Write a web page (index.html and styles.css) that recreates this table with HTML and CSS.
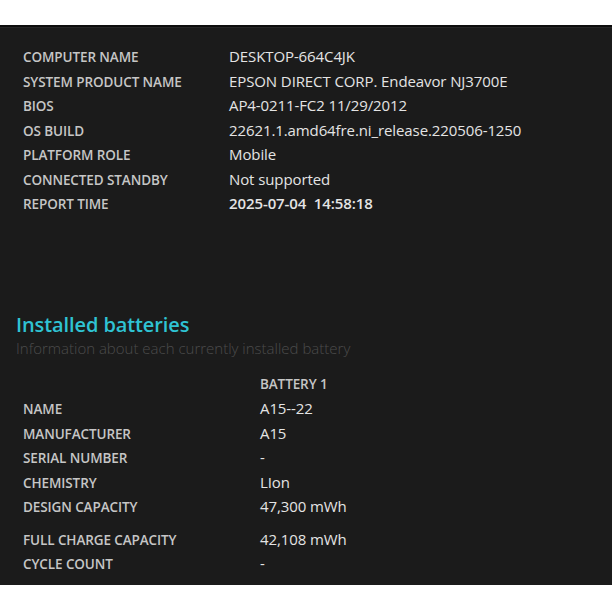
FILE: index.html
```html
<!DOCTYPE html>
<html>
<head>
<meta charset="utf-8">
<link rel="stylesheet" href="styles.css">
</head>
<body>
<div class="panel">
  <div class="info">
    <div class="row"><span class="label">COMPUTER NAME</span><span class="value">DESKTOP-664C4JK</span></div>
    <div class="row"><span class="label">SYSTEM PRODUCT NAME</span><span class="value">EPSON DIRECT CORP. Endeavor NJ3700E</span></div>
    <div class="row"><span class="label">BIOS</span><span class="value">AP4-0211-FC2 11/29/2012</span></div>
    <div class="row"><span class="label">OS BUILD</span><span class="value">22621.1.amd64fre.ni_release.220506-1250</span></div>
    <div class="row"><span class="label">PLATFORM ROLE</span><span class="value">Mobile</span></div>
    <div class="row"><span class="label">CONNECTED STANDBY</span><span class="value">Not supported</span></div>
    <div class="row"><span class="label">REPORT TIME</span><span class="value strong">2025-07-04&nbsp;&nbsp;14:58:18</span></div>
  </div>

  <div class="section">
    <h2 class="title">Installed batteries</h2>
    <div class="subtitle">Information about each currently installed battery</div>
  </div>

  <div class="battery">
    <div class="brow"><span class="label"></span><span class="label">BATTERY 1</span></div>
    <div class="brow"><span class="label">NAME</span><span class="value">A15--22</span></div>
    <div class="brow"><span class="label">MANUFACTURER</span><span class="value">A15</span></div>
    <div class="brow"><span class="label">SERIAL NUMBER</span><span class="value">-</span></div>
    <div class="brow"><span class="label">CHEMISTRY</span><span class="value">LIon</span></div>
    <div class="brow spaced"><span class="label">DESIGN CAPACITY</span><span class="value">47,300 mWh</span></div>
    <div class="brow"><span class="label">FULL CHARGE CAPACITY</span><span class="value">42,108 mWh</span></div>
    <div class="brow"><span class="label">CYCLE COUNT</span><span class="value">-</span></div>
  </div>
</div>
</body>
</html>
```

FILE: styles.css
```css
html, body {
  margin: 0;
  padding: 0;
  background: #ffffff;
}
body {
  padding-top: 25px;
  font-family: "Open Sans", "Noto Sans", sans-serif;
}
.panel {
  height: 541px;
  background: #1b1b1b;
  border-top: 2px solid #0d0d0d;
  box-shadow: inset 0 1px 0 #262626;
  padding-top: 17px;
  box-sizing: content-box;
}
.info {
  padding-left: 23px;
}
.row {
  display: grid;
  grid-template-columns: 206px 1fr;
  height: 24.5px;
  line-height: 24.5px;
  align-items: baseline;
}
.label {
  font-weight: 600;
  font-size: 13.5px;
  color: #c6c6c6;
  letter-spacing: -0.1px;
}
.value {
  font-size: 15px;
  color: #e4e4e4;
  letter-spacing: -0.1px;
}
.strong {
  font-weight: 600;
}
.section {
  padding-left: 16px;
  margin-top: 96px;
}
.title {
  margin: 0;
  font-size: 20px;
  font-weight: 600;
  color: #2fc3d3;
  line-height: 26px;
  letter-spacing: -0.1px;
}
.subtitle {
  font-size: 15px;
  font-weight: 300;
  color: #4b4b4b;
  line-height: 20px;
}
.battery {
  padding-left: 23px;
  margin-top: 14px;
}
.brow {
  display: grid;
  grid-template-columns: 237px 1fr;
  height: 24.5px;
  line-height: 24.5px;
  align-items: baseline;
}
.spaced {
  margin-bottom: 8px;
}
```
